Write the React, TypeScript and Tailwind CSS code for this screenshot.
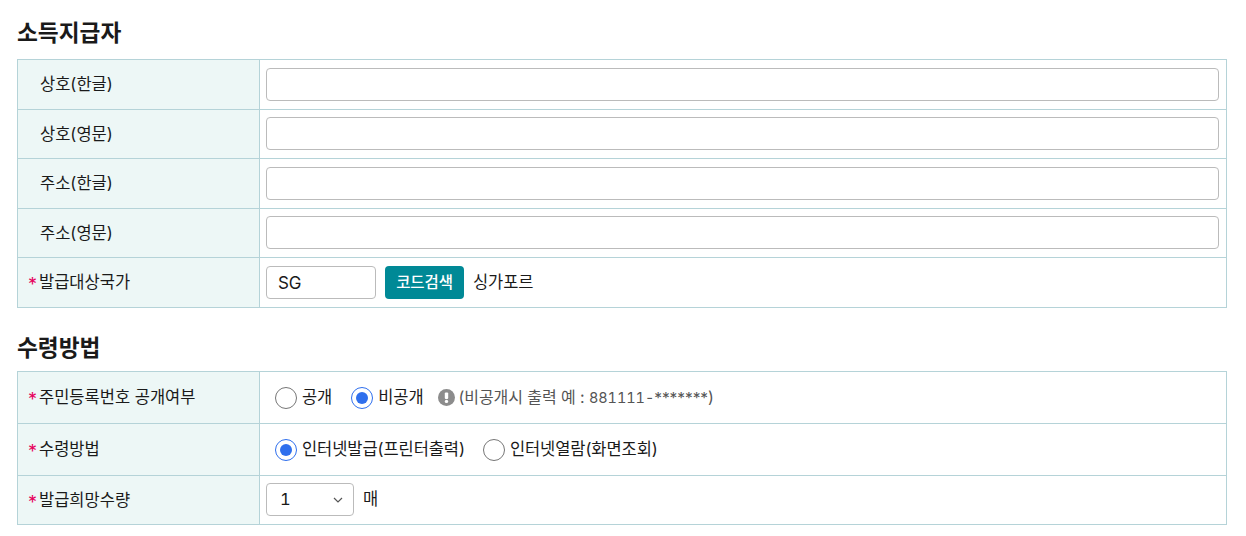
import { ReactNode } from "react";

const font = { fontFamily: 'Inter, "Noto Sans CJK KR", sans-serif' };

const Req = () => (
  <span className="mr-[3px] -ml-[1px] inline-block w-[8px] align-[-3px] text-[18px] leading-none text-[#e6005c]">*</span>
);

const Row = ({
  label,
  required,
  height,
  children,
}: {
  label: string;
  required?: boolean;
  height: string;
  children: ReactNode;
}) => (
  <tr className={height}>
    <th
      className={`w-[242px] border border-[#b5d3d8] bg-[#edf7f6] text-left text-[16.5px] font-normal text-[#1a1a1a] ${required ? "pl-[11px]" : "pl-[22px]"}`}
    >
      {required && <Req />}
      {label}
    </th>
    <td className="border border-[#b5d3d8] pr-[7px] pl-[6px] text-[16.5px] tracking-[-0.08px] text-[#1a1a1a]">{children}</td>
  </tr>
);

const TextBox = ({ short }: { short?: boolean }) => (
  <input
    type="text"
    className={`block h-[33px] w-full rounded-[4px] border border-[#bbbbbb] bg-white px-3 text-[15px] ${short ? "mb-[1px]" : ""}`}
  />
);

const Radio = ({ label, checked, gap }: { label: string; checked?: boolean; gap: string }) => (
  <label className={`flex items-center gap-[5px] ${gap}`}>
    <span
      className={`flex h-[22px] w-[22px] items-center justify-center rounded-full border bg-white ${checked ? "border-[#2f6fed]" : "border-[#767676]"}`}
    >
      {checked && <span className="h-[12px] w-[12px] rounded-full bg-[#2f6fed]" />}
    </span>
    {label}
  </label>
);

const App = () => {
  return (
    <div className="h-[536px] w-[1246px] overflow-hidden bg-white px-[17px] pt-[17px]" style={font}>
      <h2 className="mb-[10px] text-[22.7px] leading-[32px] font-bold text-[#1a1a1a]">소득지급자</h2>
      <table className="w-[1210px] table-fixed border-collapse">
        <tbody>
          <Row label="상호(한글)" height="h-[50px]"><TextBox /></Row>
          <Row label="상호(영문)" height="h-[49px]"><TextBox short /></Row>
          <Row label="주소(한글)" height="h-[50px]"><TextBox /></Row>
          <Row label="주소(영문)" height="h-[49px]"><TextBox short /></Row>
          <Row label="발급대상국가" required height="h-[50px]">
            <div className="flex items-center">
              <input
                type="text"
                defaultValue="SG"
                className="h-[33px] w-[110px] rounded-[4px] border border-[#bbbbbb] bg-white px-[11px] text-[17px] text-[#1a1a1a]"
              />
              <button className="ml-[9px] h-[33px] w-[79px] rounded-[4px] bg-[#008996] text-[15.5px] font-medium text-white">
                코드검색
              </button>
              <span className="ml-[9px]">싱가포르</span>
            </div>
          </Row>
        </tbody>
      </table>

      <h2 className="mt-[24px] mb-[7px] text-[22.7px] leading-[32px] font-bold text-[#1a1a1a]">수령방법</h2>
      <table className="w-[1210px] table-fixed border-collapse">
        <tbody>
          <Row label="주민등록번호 공개여부" required height="h-[52px]">
            <div className="flex items-center pl-[9px]">
              <Radio label="공개" gap="mr-[19px]" />
              <Radio label="비공개" checked gap="mr-[18px]" />
              <span className="-ml-[4px] flex items-center gap-[4px] text-[16px] text-[#555]">
                <svg width="17" height="17" viewBox="0 0 17 17">
                  <circle cx="8.5" cy="8.5" r="8.5" fill="#8c8c8c" />
                  <rect x="6.8" y="3.5" width="3.4" height="6.5" rx="1" fill="#fff" />
                  <circle cx="8.5" cy="12.4" r="1.7" fill="#fff" />
                </svg>
                <span>
                  (비공개시 출력 예 : <span className="text-[14.5px] tabular-nums">881111-</span>
                  <span className="align-[-1px] text-[15.5px]">*******</span>)
                </span>
              </span>
            </div>
          </Row>
          <Row label="수령방법" required height="h-[52px]">
            <div className="flex items-center pl-[9px]">
              <Radio label="인터넷발급(프린터출력)" checked gap="mr-[18px]" />
              <Radio label="인터넷열람(화면조회)" gap="mr-[18px]" />
            </div>
          </Row>
          <Row label="발급희망수량" required height="h-[49px]">
            <div className="mb-[1px] flex items-center">
              <div className="flex h-[33px] w-[88px] items-center justify-between rounded-[4px] border border-[#bbbbbb] bg-white pr-[10px] pl-[13px]">
                <span className="tabular-nums">1</span>
                <svg width="10" height="6" viewBox="0 0 10 6" fill="none" stroke="#555" strokeWidth="1.2">
                  <path d="M1 1l4 4 4-4" />
                </svg>
              </div>
              <span className="ml-[9px]">매</span>
            </div>
          </Row>
        </tbody>
      </table>
    </div>
  );
};

export default App;
